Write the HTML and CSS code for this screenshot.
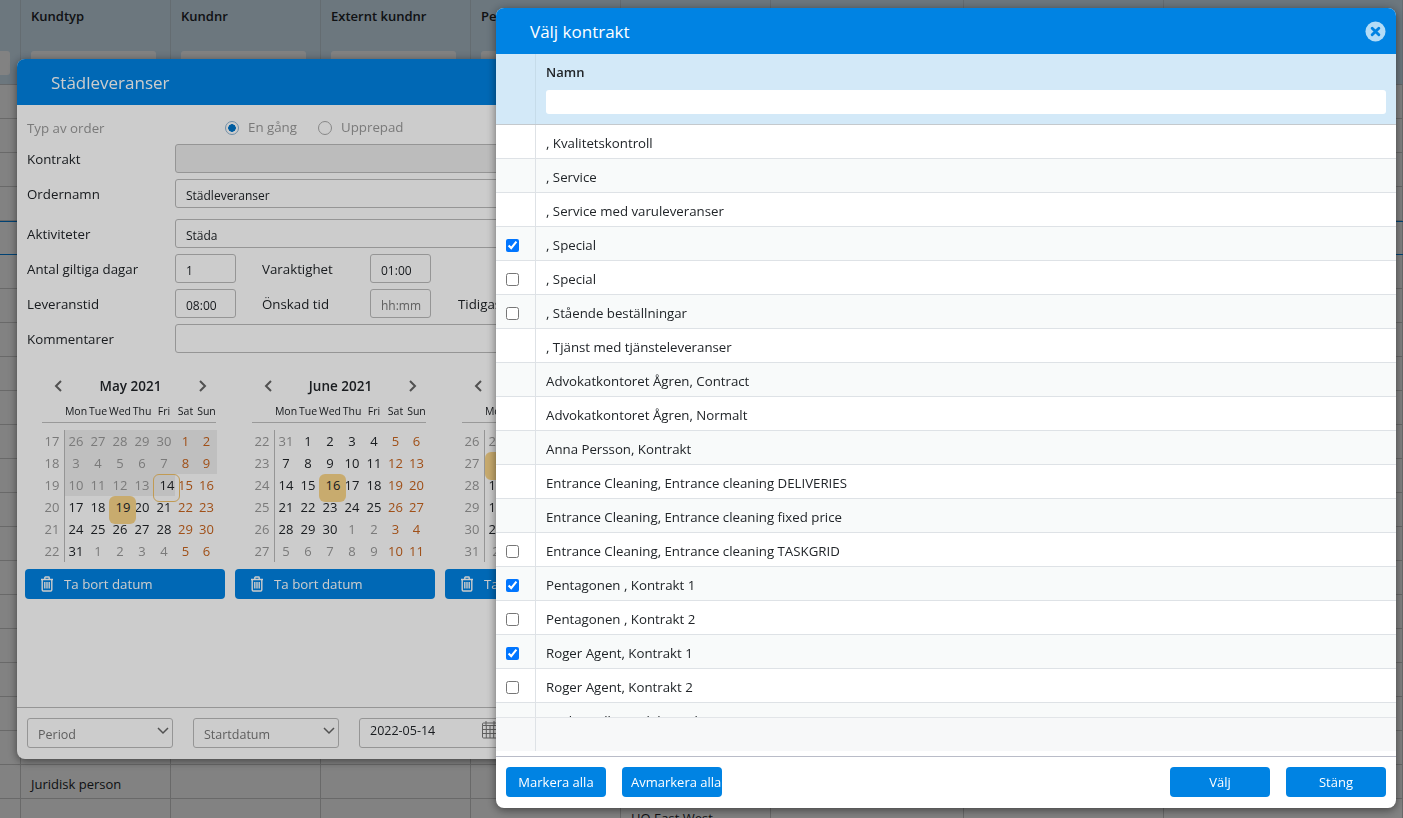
FILE: index.html
```html
<!DOCTYPE html>
<html lang="sv">
<head>
    <meta charset="UTF-8">
    <title>Välj kontrakt</title>
    <link rel="stylesheet" href="styles.css">
</head>
<body>
    <div class="page">
        <div class="grid-head">
            <div class="head-cell"><span class="head-filter"></span></div>
            <div class="head-cell">Kundtyp<span class="head-filter"></span></div>
            <div class="head-cell">Kundnr<span class="head-filter"></span></div>
            <div class="head-cell">Externt kundnr<span class="head-filter"></span></div>
            <div class="head-cell">Person<span class="head-filter"></span></div>
            <div class="head-cell"><span class="head-filter"></span></div>
            <div class="head-cell"><span class="head-filter"></span></div>
            <div class="head-cell"><span class="head-filter"></span></div>
            <div class="head-cell"><span class="head-filter"></span></div>
        </div>
        <div class="grid-row"><div></div><div></div><div></div><div></div><div></div><div></div><div></div><div></div><div></div></div>
        <div class="grid-row"><div></div><div></div><div></div><div></div><div></div><div></div><div></div><div></div><div></div></div>
        <div class="grid-row"><div></div><div></div><div></div><div></div><div></div><div></div><div></div><div></div><div></div></div>
        <div class="grid-row"><div></div><div></div><div></div><div></div><div></div><div></div><div></div><div></div><div></div></div>
        <div class="grid-row selected"><div></div><div></div><div></div><div></div><div></div><div></div><div></div><div></div><div></div></div>
        <div class="grid-row"><div></div><div></div><div></div><div></div><div></div><div></div><div></div><div></div><div></div></div>
        <div class="grid-row"><div></div><div></div><div></div><div></div><div></div><div></div><div></div><div></div><div></div></div>
        <div class="grid-row"><div></div><div></div><div></div><div></div><div></div><div></div><div></div><div></div><div></div></div>
        <div class="grid-row"><div></div><div></div><div></div><div></div><div></div><div></div><div></div><div></div><div></div></div>
        <div class="grid-row"><div></div><div></div><div></div><div></div><div></div><div></div><div></div><div></div><div></div></div>
        <div class="grid-row"><div></div><div></div><div></div><div></div><div></div><div></div><div></div><div></div><div></div></div>
        <div class="grid-row"><div></div><div></div><div></div><div></div><div></div><div></div><div></div><div></div><div></div></div>
        <div class="grid-row"><div></div><div></div><div></div><div></div><div></div><div></div><div></div><div></div><div></div></div>
        <div class="grid-row"><div></div><div></div><div></div><div></div><div></div><div></div><div></div><div></div><div></div></div>
        <div class="grid-row"><div></div><div></div><div></div><div></div><div></div><div></div><div></div><div></div><div></div></div>
        <div class="grid-row"><div></div><div></div><div></div><div></div><div></div><div></div><div></div><div></div><div></div></div>
        <div class="grid-row"><div></div><div></div><div></div><div></div><div></div><div></div><div></div><div></div><div></div></div>
        <div class="grid-row"><div></div><div></div><div></div><div></div><div></div><div></div><div></div><div></div><div></div></div>
        <div class="grid-row"><div></div><div></div><div></div><div></div><div></div><div></div><div></div><div></div><div></div></div>
        <div class="grid-row"><div></div><div></div><div></div><div></div><div></div><div></div><div></div><div></div><div></div></div>
        <div class="grid-row"><div></div><div>Juridisk person</div><div></div><div></div><div></div><div></div><div></div><div></div><div></div></div>
        <div class="grid-row"><div></div><div></div><div></div><div></div><div></div><div>HO East West</div><div></div><div></div><div></div></div>
    </div>

    <div class="overlay overlay-back"></div>

    <div class="modal modal-order">
        <div class="modal-header">Städleveranser</div>
        <div class="modal-body">
            <div class="form-row type-row">
                <label class="form-label muted">Typ av order</label>
                <span class="radio on"></span><span class="radio-text">En gång</span>
                <span class="radio"></span><span class="radio-text">Upprepad</span>
            </div>
            <div class="form-row">
                <label class="form-label">Kontrakt</label>
                <div class="field field-wide field-disabled"></div>
            </div>
            <div class="form-row gap-large">
                <label class="form-label">Ordernamn</label>
                <div class="field field-wide">Städleveranser</div>
            </div>
            <div class="form-row gap-top">
                <label class="form-label">Aktiviteter</label>
                <div class="field field-wide">Städa</div>
            </div>
            <div class="form-row">
                <label class="form-label">Antal giltiga dagar</label>
                <div class="field field-small">1</div>
                <label class="form-label-mid">Varaktighet</label>
                <div class="field field-small">01:00</div>
            </div>
            <div class="form-row">
                <label class="form-label">Leveranstid</label>
                <div class="field field-small">08:00</div>
                <label class="form-label-mid">Önskad tid</label>
                <div class="field field-small placeholder">hh:mm</div>
                <label class="form-label-end">Tidigast</label>
            </div>
            <div class="form-row">
                <label class="form-label">Kommentarer</label>
                <div class="field field-wide"></div>
            </div>

            <div class="calendars">
                <div class="cal-col">
                    <div class="cal-nav">
                        <svg class="chev" viewBox="0 0 10 14"><path d="M8 2 3 7l5 5"/></svg>
                        <span class="cal-title">May 2021</span>
                        <svg class="chev" viewBox="0 0 10 14"><path d="m2 2 5 5-5 5"/></svg>
                    </div>
                    <div class="cal-days"><span></span><span>Mon</span><span>Tue</span><span>Wed</span><span>Thu</span><span>Fri</span><span>Sat</span><span>Sun</span></div>
                    <div class="cal-grid">
                        <b>17</b><span class="p m">26</span><span class="p m">27</span><span class="p m">28</span><span class="p m">29</span><span class="p m">30</span><span class="p w">1</span><span class="p w">2</span>
                        <b>18</b><span class="p m">3</span><span class="p m">4</span><span class="p m">5</span><span class="p m">6</span><span class="p m">7</span><span class="p w">8</span><span class="p w">9</span>
                        <b>19</b><span class="p m">10</span><span class="p m">11</span><span class="p m">12</span><span class="p m">13</span><span class="p today">14</span><span class="w">15</span><span class="w">16</span>
                        <b>20</b><span>17</span><span>18</span><span class="sel">19</span><span>20</span><span>21</span><span class="w">22</span><span class="w">23</span>
                        <b>21</b><span>24</span><span>25</span><span>26</span><span>27</span><span>28</span><span class="w">29</span><span class="w">30</span>
                        <b>22</b><span>31</span><span class="m">1</span><span class="m">2</span><span class="m">3</span><span class="m">4</span><span class="w">5</span><span class="w">6</span>
                    </div>
                    <button class="btn-remove">
                        <svg class="trash" viewBox="0 0 14 16"><path d="M1 3.5h12M4.8 3.2V1.6c0-.4.3-.6.6-.6h3.2c.3 0 .6.2.6.6v1.6M2.2 3.5v10.3c0 .7.5 1.2 1.2 1.2h7.2c.7 0 1.2-.5 1.2-1.2V3.5M4.8 6v6.5M7 6v6.5M9.2 6v6.5"/></svg>
                        Ta bort datum
                    </button>
                </div>
                <div class="cal-col">
                    <div class="cal-nav">
                        <svg class="chev" viewBox="0 0 10 14"><path d="M8 2 3 7l5 5"/></svg>
                        <span class="cal-title">June 2021</span>
                        <svg class="chev" viewBox="0 0 10 14"><path d="m2 2 5 5-5 5"/></svg>
                    </div>
                    <div class="cal-days"><span></span><span>Mon</span><span>Tue</span><span>Wed</span><span>Thu</span><span>Fri</span><span>Sat</span><span>Sun</span></div>
                    <div class="cal-grid">
                        <b>22</b><span class="m">31</span><span>1</span><span>2</span><span>3</span><span>4</span><span class="w">5</span><span class="w">6</span>
                        <b>23</b><span>7</span><span>8</span><span>9</span><span>10</span><span>11</span><span class="w">12</span><span class="w">13</span>
                        <b>24</b><span>14</span><span>15</span><span class="sel">16</span><span>17</span><span>18</span><span class="w">19</span><span class="w">20</span>
                        <b>25</b><span>21</span><span>22</span><span>23</span><span>24</span><span>25</span><span class="w">26</span><span class="w">27</span>
                        <b>26</b><span>28</span><span>29</span><span>30</span><span class="m">1</span><span class="m">2</span><span class="w">3</span><span class="w">4</span>
                        <b>27</b><span class="m">5</span><span class="m">6</span><span class="m">7</span><span class="m">8</span><span class="m">9</span><span class="w">10</span><span class="w">11</span>
                    </div>
                    <button class="btn-remove">
                        <svg class="trash" viewBox="0 0 14 16"><path d="M1 3.5h12M4.8 3.2V1.6c0-.4.3-.6.6-.6h3.2c.3 0 .6.2.6.6v1.6M2.2 3.5v10.3c0 .7.5 1.2 1.2 1.2h7.2c.7 0 1.2-.5 1.2-1.2V3.5M4.8 6v6.5M7 6v6.5M9.2 6v6.5"/></svg>
                        Ta bort datum
                    </button>
                </div>
                <div class="cal-col">
                    <div class="cal-nav">
                        <svg class="chev" viewBox="0 0 10 14"><path d="M8 2 3 7l5 5"/></svg>
                        <span class="cal-title">July 2021</span>
                        <svg class="chev" viewBox="0 0 10 14"><path d="m2 2 5 5-5 5"/></svg>
                    </div>
                    <div class="cal-days"><span></span><span>Mon</span><span>Tue</span><span>Wed</span><span>Thu</span><span>Fri</span><span>Sat</span><span>Sun</span></div>
                    <div class="cal-grid">
                        <b>26</b><span class="m">28</span><span class="m">29</span><span class="m">30</span><span>1</span><span>2</span><span class="w">3</span><span class="w">4</span>
                        <b>27</b><span class="sel">5</span><span>6</span><span>7</span><span>8</span><span>9</span><span class="w">10</span><span class="w">11</span>
                        <b>28</b><span>12</span><span>13</span><span>14</span><span>15</span><span>16</span><span class="w">17</span><span class="w">18</span>
                        <b>29</b><span>19</span><span>20</span><span>21</span><span>22</span><span>23</span><span class="w">24</span><span class="w">25</span>
                        <b>30</b><span>26</span><span>27</span><span>28</span><span>29</span><span>30</span><span class="w">31</span><span class="w">1</span>
                        <b>31</b><span class="m">2</span><span class="m">3</span><span class="m">4</span><span class="m">5</span><span class="m">6</span><span class="w">7</span><span class="w">8</span>
                    </div>
                    <button class="btn-remove">
                        <svg class="trash" viewBox="0 0 14 16"><path d="M1 3.5h12M4.8 3.2V1.6c0-.4.3-.6.6-.6h3.2c.3 0 .6.2.6.6v1.6M2.2 3.5v10.3c0 .7.5 1.2 1.2 1.2h7.2c.7 0 1.2-.5 1.2-1.2V3.5M4.8 6v6.5M7 6v6.5M9.2 6v6.5"/></svg>
                        Ta bort datum
                    </button>
                </div>
            </div>
        </div>
        <div class="order-footer">
            <div class="select-box">Period
                <svg class="select-chev" viewBox="0 0 12 8"><path d="m1 1 5 5 5-5"/></svg>
            </div>
            <div class="select-box">Startdatum
                <svg class="select-chev" viewBox="0 0 12 8"><path d="m1 1 5 5 5-5"/></svg>
            </div>
            <div class="date-box">2022-05-14
                <svg class="date-icon" viewBox="0 0 16 18"><path d="M.5 5V3.5c0-.6.4-1 1-1h13c.6 0 1 .4 1 1V5zM.5 5v11.5c0 .6.4 1 1 1h13c.6 0 1-.4 1-1V5M.5 9h15M.5 13h15M4.3 5v12.5M8 5v12.5M11.7 5v12.5M4 .5v4M12 .5v4"/></svg>
            </div>
        </div>
    </div>

    <div class="overlay overlay-front"></div>

    <div class="modal modal-contracts">
        <div class="modal-header">
            Välj kontrakt
            <svg class="close-icon" viewBox="0 0 22 22"><circle cx="11" cy="11" r="10.5"/><path d="m7.5 7.5 7 7m0-7-7 7"/></svg>
        </div>
        <div class="list-head">
            <div class="check-cell"></div>
            <div class="name-head">
                <span class="name-title">Namn</span>
                <input class="name-filter" type="text">
            </div>
        </div>
        <div class="list-body">
            <div class="list-row"><div class="check-cell"></div><div class="name-cell">, Kvalitetskontroll</div></div>
            <div class="list-row"><div class="check-cell"></div><div class="name-cell">, Service</div></div>
            <div class="list-row"><div class="check-cell"></div><div class="name-cell">, Service med varuleveranser</div></div>
            <div class="list-row"><div class="check-cell"><input type="checkbox" checked></div><div class="name-cell">, Special</div></div>
            <div class="list-row"><div class="check-cell"><input type="checkbox"></div><div class="name-cell">, Special</div></div>
            <div class="list-row"><div class="check-cell"><input type="checkbox"></div><div class="name-cell">, Stående beställningar</div></div>
            <div class="list-row"><div class="check-cell"></div><div class="name-cell">, Tjänst med tjänsteleveranser</div></div>
            <div class="list-row"><div class="check-cell"></div><div class="name-cell">Advokatkontoret Ågren, Contract</div></div>
            <div class="list-row"><div class="check-cell"></div><div class="name-cell">Advokatkontoret Ågren, Normalt</div></div>
            <div class="list-row"><div class="check-cell"></div><div class="name-cell">Anna Persson, Kontrakt</div></div>
            <div class="list-row"><div class="check-cell"></div><div class="name-cell">Entrance Cleaning, Entrance cleaning DELIVERIES</div></div>
            <div class="list-row"><div class="check-cell"></div><div class="name-cell">Entrance Cleaning, Entrance cleaning fixed price</div></div>
            <div class="list-row"><div class="check-cell"><input type="checkbox"></div><div class="name-cell">Entrance Cleaning, Entrance cleaning TASKGRID</div></div>
            <div class="list-row"><div class="check-cell"><input type="checkbox" checked></div><div class="name-cell">Pentagonen , Kontrakt 1</div></div>
            <div class="list-row"><div class="check-cell"><input type="checkbox"></div><div class="name-cell">Pentagonen , Kontrakt 2</div></div>
            <div class="list-row"><div class="check-cell"><input type="checkbox" checked></div><div class="name-cell">Roger Agent, Kontrakt 1</div></div>
            <div class="list-row"><div class="check-cell"><input type="checkbox"></div><div class="name-cell">Roger Agent, Kontrakt 2</div></div>
            <div class="list-row"><div class="check-cell"></div><div class="name-cell">Sankt Fridhemsdal, Avtal</div></div>
        </div>
        <div class="list-foot">
            <div class="check-cell"></div>
            <div class="name-cell"></div>
        </div>
        <div class="contracts-footer">
            <button class="btn">Markera alla</button>
            <button class="btn btn-clip">Avmarkera alla</button>
            <button class="btn btn-right">Välj</button>
            <button class="btn">Stäng</button>
        </div>
    </div>
</body>
</html>
```

FILE: styles.css
```css
html, body {
    height: 100%;
    margin: 0;
    overflow: hidden;
    font-family: "Open Sans", "Noto Sans", sans-serif;
    font-size: 13px;
    color: #212529;
    background-color: #fff;
}

/* page behind the dialogs */
.page {
    height: 100%;
    overflow: hidden;
}

.grid-head, .grid-row {
    display: grid;
    grid-template-columns: 21px 150px 150px 150px 150px 150px 193px 200px 1fr;
}

.grid-head {
    height: 85px;
    background-color: #d3e9f8;
    border-bottom: 1px solid #c8ccd0;
    box-sizing: border-box;
}

.head-cell {
    position: relative;
    padding: 7px 10px 0;
    border-right: 1px solid #c4d4de;
    font-weight: 600;
    white-space: nowrap;
    overflow: hidden;
}

.head-cell:first-child {
    padding: 0;
}

.head-filter {
    position: absolute;
    left: 10px;
    right: 14px;
    top: 51px;
    height: 24px;
    background-color: #fff;
    border-radius: 3px;
}

.head-cell:first-child .head-filter {
    left: -20px;
    right: 10px;
}

.grid-row {
    height: 34px;
    box-sizing: border-box;
    border-bottom: 1px solid #cfcfcf;
}

.grid-row div {
    padding: 10px 10px 0;
    border-right: 1px solid #cfcfcf;
    white-space: nowrap;
    line-height: 18px;
}

.grid-row.selected {
    border-top: 1px solid #0083e3;
    border-bottom: 1px solid #0083e3;
}

.overlay {
    position: fixed;
    top: 0;
    left: 0;
    right: 0;
    bottom: 0;
}

.overlay-back {
    background-color: rgba(0, 0, 0, 0.36);
}

.overlay-front {
    background-color: rgba(0, 0, 0, 0.2);
}

/* dialogs */
.modal {
    position: fixed;
    width: 900px;
    height: 800px;
    display: flex;
    flex-direction: column;
    background-color: #fff;
    border-radius: 8px;
    box-shadow: 0 2px 10px rgba(0, 0, 0, 0.5);
    overflow: hidden;
}

.modal-order {
    left: 17px;
    top: 59px;
    height: 700px;
}

.modal-contracts {
    left: 496px;
    top: 8px;
}

.modal-header {
    flex: none;
    height: 46px;
    padding-left: 34px;
    display: flex;
    align-items: center;
    justify-content: space-between;
    background-color: #0083e3;
    color: #fff;
    font-size: 17px;
}

.close-icon {
    width: 21px;
    height: 21px;
    margin-right: 10px;
}

.close-icon circle {
    fill: #b3dcf7;
}

.close-icon path {
    fill: none;
    stroke: #0083e3;
    stroke-width: 3;
    stroke-linecap: round;
}

/* order form */
.modal-body {
    flex: 1;
    padding: 11px 10px 0;
}

.form-row {
    display: flex;
    align-items: center;
    height: 29px;
    margin-bottom: 6px;
    font-size: 13.3px;
}

.form-row.type-row {
    height: 24px;
    margin-bottom: 4px;
}

.form-row.gap-large {
    margin-bottom: 11px;
}

.form-label {
    width: 148px;
    flex: none;
}

.muted {
    color: #999;
}

.radio {
    width: 14px;
    height: 14px;
    margin-left: 50px;
    box-sizing: border-box;
    border: 1px solid #aaa;
    border-radius: 50%;
    background-color: #fff;
    flex: none;
}

.radio.on {
    border-color: #8fb4d2;
    background: radial-gradient(circle, #0075c9 0 3.5px, #fff 4px);
}

.radio + .radio-text + .radio {
    margin-left: 21px;
}

.radio-text {
    margin-left: 9px;
    color: #999;
    padding-bottom: 2px;
}

.field {
    box-sizing: border-box;
    height: 29px;
    padding: 7px 10px 0;
    line-height: 18px;
    font-size: 12px;
    border: 1px solid #bbb;
    border-radius: 3px;
    background-color: #fff;
    flex: none;
}

.field-wide {
    width: 720px;
}

.field-small {
    width: 61px;
}

.field-disabled {
    background-color: #ececec;
}

.placeholder {
    color: #777;
}

.form-label-mid {
    width: 108px;
    margin-left: 26px;
    flex: none;
}

.form-label-end {
    margin-left: 27px;
}

/* calendars */
.calendars {
    display: flex;
    gap: 10px;
    margin-top: 22px;
    margin-left: -2px;
    width: 900px;
}

.cal-col {
    width: 200px;
    flex: none;
}

.cal-nav {
    display: flex;
    align-items: center;
    justify-content: space-between;
    height: 22px;
    padding: 0 17px 0 28px;
}

.cal-title {
    font-weight: 600;
    font-size: 13.5px;
}

.chev {
    width: 10px;
    height: 14px;
    fill: none;
    stroke: #666;
    stroke-width: 2;
}

.cal-days, .cal-grid {
    display: grid;
    grid-template-columns: 23px 22px 22px 22px 22px 22px 21px 21px;
    margin-left: 17px;
}

.cal-days {
    width: 174px;
    height: 24px;
    align-items: center;
    margin-top: 2px;
    border-bottom: 1px solid #c0c0c0;
    box-sizing: border-box;
    font-size: 10.5px;
    text-align: center;
    white-space: nowrap;
}

.cal-days span {
    display: flex;
    justify-content: center;
}

.cal-grid {
    margin-top: 7px;
    grid-auto-rows: 22px;
    margin-bottom: 7px;
}

.cal-grid b, .cal-grid span {
    display: flex;
    align-items: center;
    justify-content: center;
    font-weight: normal;
    font-size: 13px;
}

.cal-grid b {
    color: #999;
    border-right: 1px solid #bbb;
    padding-right: 2px;
}

.cal-grid .p {
    background-color: #efefef;
}

.cal-grid .m {
    color: #999;
}

.cal-grid .w {
    color: #c8641e;
}

.cal-grid .sel, .cal-grid .today {
    position: relative;
    z-index: 1;
    padding-left: 6px;
}

.cal-grid .sel::before, .cal-grid .today::before {
    content: "";
    position: absolute;
    left: 0;
    top: 0;
    width: 27px;
    height: 28px;
    box-sizing: border-box;
    border-radius: 6px;
    z-index: -1;
}

.cal-grid .sel::before {
    background-color: #fbd68a;
}

.cal-grid .today::before {
    border: 1px solid #f2c26a;
}

.btn-remove {
    display: flex;
    align-items: center;
    width: 200px;
    height: 30px;
    padding: 0 0 0 15px;
    border: none;
    border-radius: 4px;
    background-color: #0083e3;
    color: #fff;
    font-family: inherit;
    font-size: 13.3px;
}

.trash {
    width: 14px;
    height: 16px;
    margin-right: 10px;
    fill: none;
    stroke: currentColor;
    stroke-width: 1.4;
}

.order-footer {
    flex: none;
    height: 52px;
    padding: 10px 10px 0;
    box-sizing: border-box;
    display: flex;
    gap: 20px;
    border-top: 1px solid #bbb;
}

.select-box, .date-box {
    position: relative;
    box-sizing: border-box;
    width: 146px;
    height: 30px;
    padding: 6px 10px 0;
    line-height: 20px;
    font-size: 12.5px;
    border: 1px solid #bbb;
    border-radius: 3px;
    color: #777;
}

.date-box {
    width: 160px;
    padding-top: 2px;
    color: #212529;
}

.select-chev {
    position: absolute;
    right: 3px;
    top: 8px;
    width: 12px;
    height: 8px;
    fill: none;
    stroke: #666;
    stroke-width: 1.5;
}

.date-icon {
    position: absolute;
    right: 20px;
    top: 1px;
    width: 16px;
    height: 19px;
    fill: none;
    stroke: #777;
    stroke-width: 1;
}

/* contract list */
.list-head {
    flex: none;
    display: flex;
    height: 71px;
    box-sizing: border-box;
    background-color: #d3e9f8;
    border-bottom: 1px solid #c4c9cd;
}

.check-cell {
    width: 40px;
    flex: none;
    display: flex;
    align-items: center;
    padding-left: 10px;
    box-sizing: border-box;
    border-right: 1px solid #dee2e6;
}

.check-cell input {
    margin: 3px 0 0;
    width: 13px;
    height: 13px;
}

.list-head .check-cell {
    border-right-color: #c6dcea;
}

.name-head {
    flex: 1;
    padding: 0 10px;
}

.name-title {
    display: block;
    margin-top: 9px;
    height: 27px;
    line-height: 18px;
    font-weight: 600;
}

.name-filter {
    display: block;
    width: 100%;
    height: 24px;
    box-sizing: border-box;
    border: none;
    border-radius: 3px;
    background-color: #fff;
}

.list-body {
    height: 592px;
    flex: none;
    overflow: hidden;
}

.list-row {
    display: flex;
    height: 34px;
    box-sizing: border-box;
    border-bottom: 1px solid #dee2e6;
}

.list-row:nth-child(even) {
    background-color: #f8fafa;
}

.name-cell {
    flex: 1;
    padding: 0 10px;
    line-height: 36px;
    font-size: 13.25px;
}

.list-foot {
    flex: none;
    display: flex;
    height: 34px;
    background-color: #f7f8f9;
    border-top: 1px solid #e2e5e8;
    box-sizing: border-box;
}

.contracts-footer {
    flex: none;
    margin-top: 5px;
    padding: 10px;
    display: flex;
    gap: 16px;
    border-top: 1px solid #b9bcc8;
}

.btn {
    width: 100px;
    height: 30px;
    padding: 0;
    border: none;
    border-radius: 4px;
    background-color: #0083e3;
    color: #fff;
    font-family: inherit;
    font-size: 13px;
    white-space: nowrap;
    overflow: hidden;
}

.btn-clip {
    text-align: left;
    padding-left: 9px;
}

.btn-right {
    margin-left: auto;
}
```
